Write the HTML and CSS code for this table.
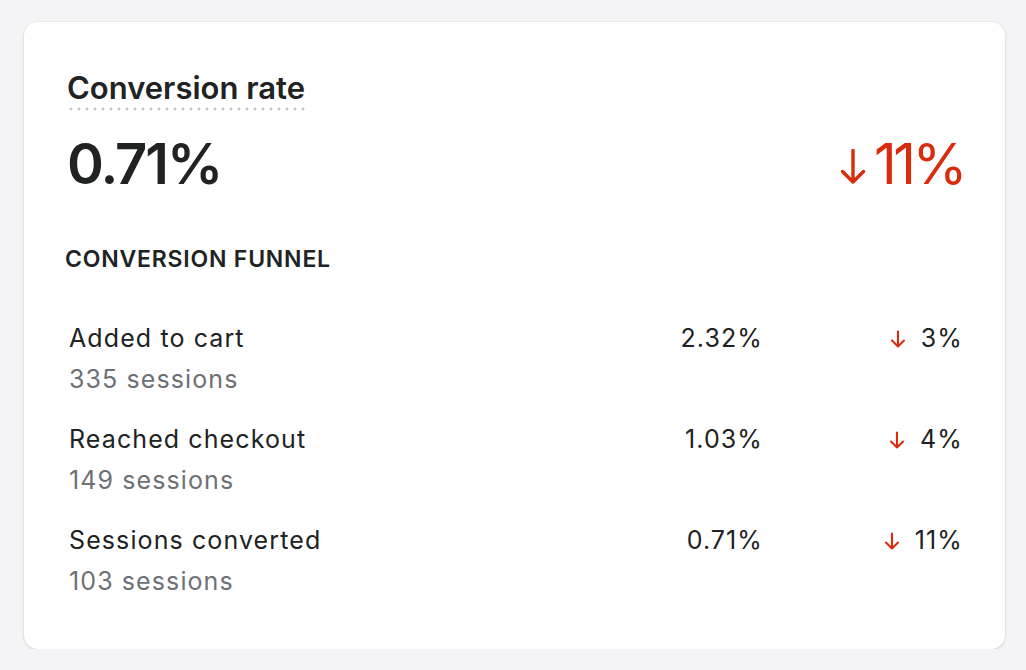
FILE: index.html
```html
<!DOCTYPE html>
<html lang="en">
<head>
<meta charset="utf-8">
<title>Conversion rate</title>
<link rel="stylesheet" href="styles.css">
</head>
<body>
<section class="card">
  <h2 class="title"><span class="title-text">Conversion rate</span></h2>
  <div class="headline">
    <span class="big-value">0.71%</span>
    <span class="big-delta">
      <svg class="arrow-big" viewBox="0 0 26 36" width="26" height="36" aria-hidden="true"><path d="M13 1.5V33M2.5 22.5L13 33L23.5 22.5" fill="none" stroke="currentColor" stroke-width="3.4" stroke-linecap="round" stroke-linejoin="round"/></svg>11%
    </span>
  </div>
  <h3 class="funnel-heading">CONVERSION FUNNEL</h3>
  <ul class="funnel">
    <li class="row">
      <div class="label">
        <span class="name">Added to cart</span>
        <span class="sessions">335 sessions</span>
      </div>
      <span class="rate">2.32%</span>
      <span class="delta"><svg class="arrow" viewBox="0 0 16 18" width="16" height="18" aria-hidden="true"><path d="M8 1.5V16.5M2 10.5L8 16.5L14 10.5" fill="none" stroke="currentColor" stroke-width="2.1" stroke-linecap="round" stroke-linejoin="round"/></svg>3%</span>
    </li>
    <li class="row">
      <div class="label">
        <span class="name">Reached checkout</span>
        <span class="sessions">149 sessions</span>
      </div>
      <span class="rate">1.03%</span>
      <span class="delta"><svg class="arrow" viewBox="0 0 16 18" width="16" height="18" aria-hidden="true"><path d="M8 1.5V16.5M2 10.5L8 16.5L14 10.5" fill="none" stroke="currentColor" stroke-width="2.1" stroke-linecap="round" stroke-linejoin="round"/></svg>4%</span>
    </li>
    <li class="row">
      <div class="label">
        <span class="name">Sessions converted</span>
        <span class="sessions">103 sessions</span>
      </div>
      <span class="rate">0.71%</span>
      <span class="delta"><svg class="arrow" viewBox="0 0 16 18" width="16" height="18" aria-hidden="true"><path d="M8 1.5V16.5M2 10.5L8 16.5L14 10.5" fill="none" stroke="currentColor" stroke-width="2.1" stroke-linecap="round" stroke-linejoin="round"/></svg>11%</span>
    </li>
  </ul>
</section>
</body>
</html>
```
FILE: styles.css
```css
html, body {
  margin: 0;
  padding: 0;
  background: #f4f4f6;
}
body {
  font-family: Inter, "Noto Sans", sans-serif;
  color: #202223;
  padding: 22px 21px 0 24px;
}
.card {
  width: 981px;
  height: 627px;
  box-sizing: border-box;
  background: #ffffff;
  border-radius: 14px;
  box-shadow: 0 1px 3px rgba(0,0,0,0.14), 0 0 0 1px rgba(0,0,0,0.02);
  padding: 46px 42px 0 43px;
}
.title {
  margin: 0;
  font-size: 31px;
  font-weight: 600;
  line-height: 40px;
  letter-spacing: 0;
}
.title-text {
  display: inline-block;
  padding-bottom: 3px;
  background-image: radial-gradient(circle, #c2c5c9 1.3px, transparent 1.7px);
  background-size: 8px 4px;
  background-repeat: repeat-x;
  background-position: 0 100%;
  line-height: 40px;
  vertical-align: top;
  margin-bottom: -3px;
}
.headline {
  display: flex;
  justify-content: space-between;
  align-items: baseline;
  margin-top: 24px;
}
.big-value {
  font-size: 56px;
  font-weight: 600;
  line-height: 64px;
  letter-spacing: -2px;
}
.big-delta {
  font-size: 56px;
  font-weight: 400;
  line-height: 64px;
  letter-spacing: -3.5px;
  margin-right: -1px;
  color: #d82c0d;
}
.arrow-big {
  display: inline-block;
  vertical-align: -1px;
  margin-right: 8px;
}
.funnel-heading {
  margin: 49px 0 0 -2px;
  font-size: 23px;
  font-weight: 600;
  letter-spacing: 0.8px;
  line-height: 28px;
}
.funnel {
  list-style: none;
  margin: 45px 0 0 0;
  padding: 0 0 0 2px;
}
.row {
  display: grid;
  grid-template-columns: 1fr 200px 200px;
  align-items: start;
  margin-bottom: 20px;
}
.label {
  display: flex;
  flex-direction: column;
}
.name, .sessions, .rate, .delta {
  font-size: 25px;
  line-height: 40px;
  letter-spacing: 1.1px;
}
.sessions {
  color: #6d7175;
  margin-top: 1px;
}
.rate {
  text-align: right;
}
.delta {
  text-align: right;
}
.arrow {
  color: #d82c0d;
  display: inline-block;
  vertical-align: -1px;
  margin-right: 15px;
}
```
